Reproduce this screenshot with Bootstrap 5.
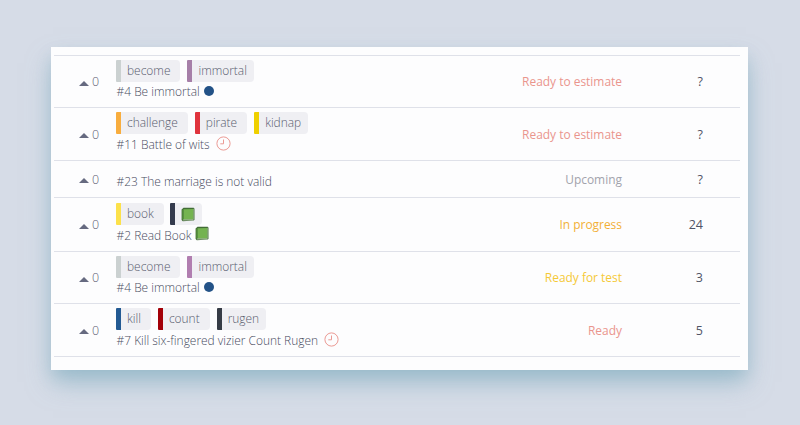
<!DOCTYPE html>
<html lang="en">
<head>
<meta charset="utf-8">
<meta name="viewport" content="width=device-width, initial-scale=1">
<title>Backlog</title>
<link href="https://cdn.jsdelivr.net/npm/bootstrap@5.3.0/dist/css/bootstrap.min.css" rel="stylesheet">
<style>
body{background:#d6dce7;font-family:"Open Sans",sans-serif;font-size:11.95px;font-weight:300;color:#484c5e;height:425px;overflow:hidden;padding:47px 52px 0 51px}
.panel{height:323px;background:#fdfdfe;padding:8px 8px 0 3px;box-shadow:0 14px 24px -2px rgba(130,174,192,.6),0 8px 14px -2px rgba(130,174,192,.35)}
.clip{height:315px}
.story{height:52px;border-top:1px solid #dfe1e9;flex:none}
.story.h53{height:53px}.story.h37{height:37px}.story.h54{height:54px}.story.h35{height:35px}
.votes{width:62px;padding:2px 0 0 25px;font-size:12.5px;color:#5c6074}
.votes svg{width:10px;height:5px;margin-right:3px;margin-top:1px}
.labels{height:22px;margin-top:4px;gap:7px}
.h54 .labels{margin-top:5px;gap:6px}
.tagbox{background:#efeff3;border-left:5px solid var(--c);border-radius:1px 4px 4px 1px;padding:0 10px 0 6px;color:#585c6e;line-height:22px;height:22px}
.tagbox:last-child{padding-right:7px}
.title{line-height:21px;height:21px;padding-left:.5px;white-space:nowrap}
.h37 .title{margin-top:10px}
.h52 .title{height:19px}
.dot{width:10px;height:10px;background:#235287;margin-left:4px;margin-bottom:1px}
.clock{width:15px;height:15px;margin:0 0 2px 6px}
.bk{width:14px;height:15px}
.state{width:140px;text-align:right;font-weight:400;padding-top:1px}
.pts{width:81px;text-align:right;font-weight:400;font-size:12.5px;padding-top:2px;color:#505466;margin-right:37px}
.red{color:#ea958d}.grey{color:#a2a3ac}.orange{color:#f2b036}.yellow{color:#f5c937}
</style>
<script src="https://cdn.jsdelivr.net/npm/bootstrap@5.3.0/dist/js/bootstrap.bundle.min.js"></script>
</head>
<body>
<svg class="d-none">
<symbol id="up" viewBox="0 0 10 5"><path d="M5 0 10 5H0z" fill="#666a80"/></symbol>
<symbol id="clock" viewBox="0 0 15 15"><circle cx="7.5" cy="7.5" r="6.6" fill="none" stroke="#eb9a94"/><path d="M7.5 3.5v4.3H4.3" fill="none" stroke="#eb9a94"/></symbol>
<symbol id="book" viewBox="0 0 14 15"><path d="M2.500.8h10.200l.8 1v11l-.8.7L1.800 14.300.6 13V2.500z" fill="#416c35"/><path d="M2.500 2.300 12.300 2v10.500H2.500z" fill="#74b350"/><path d="M2 13.300h10.500v-.7H2z" fill="#dce3d5"/><path d="M1.800 2.600v10" stroke="#55913d"/><path d="M12.800 1.800v10.600" stroke="#b8cbb0" stroke-width=".6"/></symbol>
</svg>
<main class="panel">
<div class="clip overflow-hidden d-flex flex-column">
<div class="story h52 d-flex">
 <div class="votes d-flex align-items-center"><svg><use href="#up"/></svg>0</div>
 <div class="flex-grow-1"><div class="labels d-flex"><span class="tagbox" style="--c:#cbd1d1">become</span><span class="tagbox" style="--c:#a67fa8">immortal</span></div><div class="title d-flex align-items-center">#4 Be immortal<span class="dot rounded-circle"></span></div></div>
 <div class="state red align-self-center">Ready to estimate</div><div class="pts align-self-center">?</div>
</div>
<div class="story h53 d-flex">
 <div class="votes d-flex align-items-center"><svg><use href="#up"/></svg>0</div>
 <div class="flex-grow-1"><div class="labels d-flex"><span class="tagbox" style="--c:#f8ad3e">challenge</span><span class="tagbox" style="--c:#e0343d">pirate</span><span class="tagbox" style="--c:#efd000">kidnap</span></div><div class="title d-flex align-items-center">#11 Battle of wits<svg class="clock"><use href="#clock"/></svg></div></div>
 <div class="state red align-self-center">Ready to estimate</div><div class="pts align-self-center">?</div>
</div>
<div class="story h37 d-flex">
 <div class="votes d-flex align-items-center"><svg><use href="#up"/></svg>0</div>
 <div class="flex-grow-1"><div class="title">#23 The marriage is not valid</div></div>
 <div class="state grey align-self-center">Upcoming</div><div class="pts align-self-center">?</div>
</div>
<div class="story h54 d-flex">
 <div class="votes d-flex align-items-center"><svg><use href="#up"/></svg>0</div>
 <div class="flex-grow-1"><div class="labels d-flex"><span class="tagbox" style="--c:#fce14b">book</span><span class="tagbox d-flex align-items-center" style="--c:#343b4d"><svg class="bk"><use href="#book"/></svg></span></div><div class="title d-flex align-items-center">#2 Read Book<svg class="bk mb-1" style="margin-left:3px"><use href="#book"/></svg></div></div>
 <div class="state orange align-self-center">In progress</div><div class="pts align-self-center">24</div>
</div>
<div class="story h52 d-flex">
 <div class="votes d-flex align-items-center"><svg><use href="#up"/></svg>0</div>
 <div class="flex-grow-1"><div class="labels d-flex"><span class="tagbox" style="--c:#cbd1d1">become</span><span class="tagbox" style="--c:#b17eb0">immortal</span></div><div class="title d-flex align-items-center">#4 Be immortal<span class="dot rounded-circle"></span></div></div>
 <div class="state yellow align-self-center">Ready for test</div><div class="pts align-self-center">3</div>
</div>
<div class="story h53 d-flex">
 <div class="votes d-flex align-items-center"><svg><use href="#up"/></svg>0</div>
 <div class="flex-grow-1"><div class="labels d-flex"><span class="tagbox" style="--c:#235a93">kill</span><span class="tagbox" style="--c:#a30008">count</span><span class="tagbox" style="--c:#363c46">rugen</span></div><div class="title d-flex align-items-center">#7 Kill six-fingered vizier Count Rugen<svg class="clock"><use href="#clock"/></svg></div></div>
 <div class="state red align-self-center">Ready</div><div class="pts align-self-center">5</div>
</div>
<div class="story h35 d-flex justify-content-between">
 <div class="votes d-flex align-items-center"><svg><use href="#up"/></svg>0</div><div class="pts align-self-center">?</div>
</div>
</div>
</main>
</body>
</html>
